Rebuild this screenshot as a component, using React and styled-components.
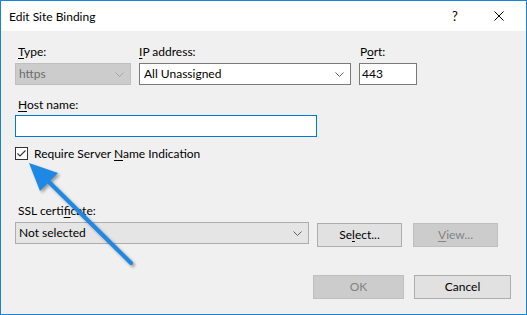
import React from "react";
import styled, { createGlobalStyle } from "styled-components";

const GlobalStyle = createGlobalStyle`
  html, body { margin: 0; padding: 0; background: #ffffff; }
  * { box-sizing: border-box; }
`;

const FONT = `Lato, "Noto Sans", Arial, sans-serif`;

const Window = styled.div`
  position: relative;
  width: 527px;
  height: 315px;
  border: 1px solid #1883d7;
  background: #f0f0f0;
  display: flex;
  flex-direction: column;
  font-family: ${FONT};
  font-size: 12px;
  color: #000;
`;

const TitleBar = styled.div`
  height: 30px;
  background: #ffffff;
  display: flex;
  align-items: center;
  padding-left: 8px;
`;

const Title = styled.div`
  flex: 1;
  font-size: 12px;
  line-height: 16px;
  margin-top: 1px;
`;

const TitleButton = styled.div`
  width: ${(p) => p.$w}px;
  height: 30px;
  display: flex;
  align-items: center;
  justify-content: center;
  font-size: 13px;
  color: #000;
`;

const Body = styled.div`
  flex: 1;
  display: flex;
  flex-direction: column;
  padding: 13px 15px 15px 14px;
`;

const TopRow = styled.div`
  display: grid;
  grid-template-columns: 116px 212px 58px;
  column-gap: 8px;
`;

const Field = styled.div`
  display: flex;
  flex-direction: column;
`;

const Label = styled.div`
  height: 16px;
  line-height: 16px;
  margin-bottom: ${(p) => p.$mb ?? 3}px;
  padding-left: ${(p) => p.$indent ?? 0}px;
  white-space: nowrap;
`;

const Key = styled.span`
  text-decoration: underline;
  text-underline-offset: 2px;
  text-decoration-thickness: 1px;
`;

const Combo = styled.div`
  height: 22px;
  display: flex;
  align-items: center;
  padding: 0 6px 0 ${(p) => p.$pl ?? 4}px;
  border: 1px solid ${(p) => p.$border};
  background: ${(p) => p.$bg};
  color: ${(p) => p.$color};
  line-height: 16px;
`;

const ComboText = styled.div`
  flex: 1;
  white-space: nowrap;
`;

const TextBox = styled.div`
  height: 22px;
  width: ${(p) => (p.$w ? `${p.$w}px` : "auto")};
  border: 1px solid ${(p) => (p.$focused ? "#0078d7" : "#7a7a7a")};
  background: #ffffff;
  display: flex;
  align-items: center;
  padding-left: 2px;
  line-height: 16px;
`;

const HostBlock = styled.div`
  margin-top: 12px;
  display: flex;
  flex-direction: column;
`;

const CheckRow = styled.div`
  margin-top: 8px;
  height: 16px;
  display: flex;
  align-items: center;
  gap: 6px;
`;

const CheckBox = styled.div`
  width: 13px;
  height: 13px;
  border: 1px solid #333333;
  background: #ffffff;
  display: flex;
  align-items: center;
  justify-content: center;
`;

const SslBlock = styled.div`
  margin-top: 42px;
  display: flex;
  flex-direction: column;
`;

const SslRow = styled.div`
  display: grid;
  grid-template-columns: 294px 85px 85px;
  align-items: start;
`;

const Button = styled.div`
  height: ${(p) => p.$h ?? 24}px;
  width: ${(p) => p.$w}px;
  margin-left: ${(p) => p.$ml ?? 0}px;
  margin-top: ${(p) => p.$mt ?? 0}px;
  display: flex;
  align-items: center;
  justify-content: center;
  border: 1px solid ${(p) => (p.$disabled ? "#bfbfbf" : "#adadad")};
  background: ${(p) => (p.$disabled ? "#cccccc" : "#e1e1e1")};
  color: ${(p) => (p.$disabled ? "#838383" : "#000")};
  line-height: 16px;
`;

const Footer = styled.div`
  margin-top: auto;
  display: flex;
  justify-content: flex-end;
  gap: 10px;
`;

const Overlay = styled.svg`
  position: absolute;
  left: -1px;
  top: -1px;
  pointer-events: none;
`;

const Chevron = ({ color }) => (
  <svg width="9" height="5" viewBox="0 0 9 5">
    <path d="M0.5 0.5 L4.5 4.5 L8.5 0.5" fill="none" stroke={color} strokeWidth="1" />
  </svg>
);

export default function App() {
  return (
    <>
      <GlobalStyle />
      <Window>
        <TitleBar>
          <Title>Edit Site Binding</Title>
          <TitleButton $w={34}>?</TitleButton>
          <TitleButton $w={54}>
            <svg width="10" height="10" viewBox="0 0 10 10">
              <path d="M0.5 0.5 L9.5 9.5 M9.5 0.5 L0.5 9.5" stroke="#000" strokeWidth="1" />
            </svg>
          </TitleButton>
        </TitleBar>
        <Body>
          <TopRow>
            <Field>
              <Label $indent={3}><Key>T</Key>ype:</Label>
              <Combo $border="#bfbfbf" $bg="#cccccc" $color="#6d6d6d" $pl={3}>
                <ComboText>https</ComboText>
                <Chevron color="#a6a6a6" />
              </Combo>
            </Field>
            <Field>
              <Label><Key>I</Key>P address:</Label>
              <Combo $border="#7a7a7a" $bg="#ffffff" $color="#000">
                <ComboText>All Unassigned</ComboText>
                <Chevron color="#606060" />
              </Combo>
            </Field>
            <Field>
              <Label $indent={1}>P<Key>o</Key>rt:</Label>
              <TextBox>443</TextBox>
            </Field>
          </TopRow>
          <HostBlock>
            <Label $indent={3} $mb={2}><Key>H</Key>ost name:</Label>
            <TextBox $w={302} $focused />
          </HostBlock>
          <CheckRow>
            <CheckBox>
              <svg width="11" height="11" viewBox="0 0 11 11">
                <path d="M1.5 5.5 L4 8 L9.5 2.5" fill="none" stroke="#333" strokeWidth="1.1" />
              </svg>
            </CheckBox>
            <span>Require Server <Key>N</Key>ame Indication</span>
          </CheckRow>
          <SslBlock>
            <Label $indent={3}>SSL certi<Key>f</Key>icate:</Label>
            <SslRow>
              <Combo $border="#adadad" $bg="#e5e5e5" $color="#000" $pl={3}>
                <ComboText>Not selected</ComboText>
                <Chevron color="#606060" />
              </Combo>
              <Button $w={85} $ml={8} $mt={1}>Se<Key>l</Key>ect...</Button>
              <Button $w={85} $ml={19} $mt={1} $disabled><Key>V</Key>iew...</Button>
            </SslRow>
          </SslBlock>
          <Footer>
            <Button $w={91} $disabled>OK</Button>
            <Button $w={97}>Cancel</Button>
          </Footer>
        </Body>
        <Overlay width="527" height="315" viewBox="0 0 527 315">
          <defs>
            <filter id="sh" x="-20%" y="-20%" width="140%" height="140%">
              <feGaussianBlur stdDeviation="1.5" />
            </filter>
          </defs>
          <g opacity="0.35" filter="url(#sh)" transform="translate(2,2)">
            <line x1="131" y1="263" x2="48" y2="181" stroke="#000" strokeWidth="4" strokeLinecap="round" />
            <polygon points="29,163 58,173 40,191" fill="#000" />
          </g>
          <line x1="131" y1="263" x2="48" y2="181" stroke="#1e88e5" strokeWidth="4" strokeLinecap="round" />
          <polygon points="29,163 58,173 40,191" fill="#1e88e5" />
        </Overlay>
      </Window>
    </>
  );
}
